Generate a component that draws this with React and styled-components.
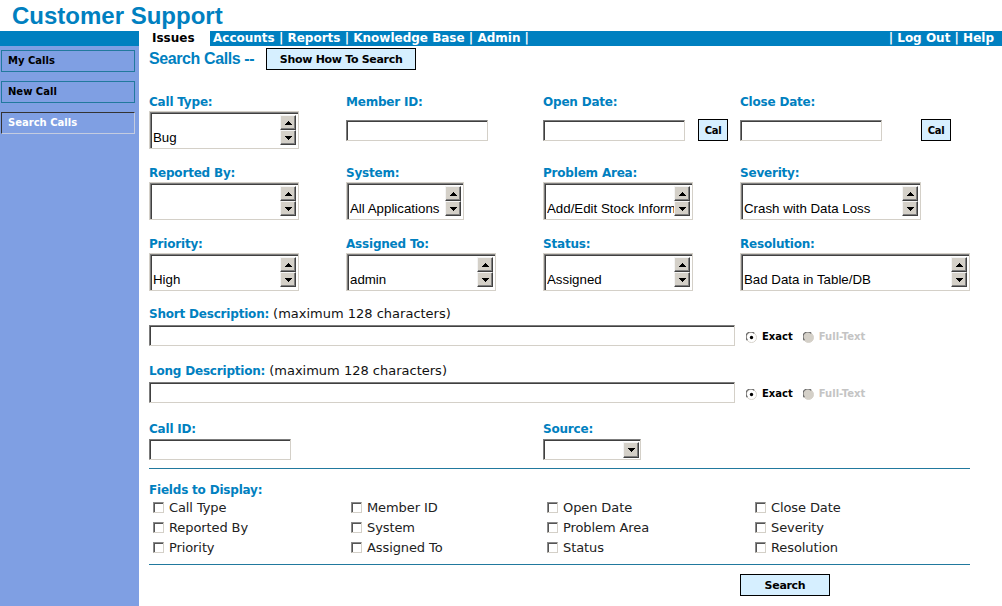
import React from 'react'
import styled, { createGlobalStyle, css } from 'styled-components'

const BLUE = '#0080c0'
const SIDE = '#7f9fe3'
const TEAL = '#21799e'
const BTN = '#d6efff'
const UI = '"DejaVu Sans", Verdana, sans-serif'
const ARIAL = '"Liberation Sans", Arial, sans-serif'

const GlobalStyle = createGlobalStyle`
  html, body {
    margin: 0;
    padding: 0;
    background: #fff;
  }
  body {
    font-family: ${UI};
    overflow: hidden;
  }
  * {
    box-sizing: border-box;
  }
`

const Page = styled.div`
  width: 1002px;
  height: 606px;
  display: flex;
  flex-direction: column;
  overflow: hidden;
`

const Header = styled.header`
  height: 31px;
  padding: 2px 0 0 12px;
`

const Title = styled.h1`
  margin: 0;
  font: bold 24px/28px ${ARIAL};
  color: ${BLUE};
`

const NavBar = styled.nav`
  height: 15px;
  display: flex;
  background: ${BLUE};
  font: bold 12px/15px ${UI};
  color: #fff;
  white-space: pre;
`

const NavSpacer = styled.div`
  width: 139px;
`

const ActiveTab = styled.div`
  width: 71px;
  padding-left: 13px;
  background: #fff;
  color: #000;
`

const NavLinks = styled.div`
  flex: 1;
  padding-left: 3px;
`

const NavRight = styled.div`
  padding-right: 8px;
`

const Body = styled.div`
  flex: 1;
  display: flex;
`

const Sidebar = styled.aside`
  width: 139px;
  background: ${SIDE};
  padding: 4px 4px 0 1px;
  display: flex;
  flex-direction: column;
  gap: 9px;
`

const SideItem = styled.div`
  height: 22px;
  padding-left: 6px;
  border: 1px solid ${TEAL};
  font: bold 10px/20px ${UI};
  color: #000;
  ${p => p.$active && css`
    border-color: #333 #c4cce0 #c4cce0 #333;
    color: #fff;
  `}
`

const Main = styled.main`
  flex: 1;
  padding: 2px 0 0 10px;
  display: flex;
  flex-direction: column;
`

const TopRow = styled.div`
  height: 22px;
  display: flex;
  align-items: center;
  gap: 12px;
`

const PageTitle = styled.h2`
  margin: 0;
  font: bold 16px/22px ${ARIAL};
  letter-spacing: -0.4px;
  color: ${BLUE};
`

const BlueButton = styled.button`
  flex-shrink: 0;
  width: ${p => p.$w}px;
  height: 22px;
  margin: 0 0 0 ${p => p.$gap || 0}px;
  padding: 0;
  background: ${BTN};
  border: 1px solid #000;
  font: bold ${p => p.$size || 11}px ${UI};
  letter-spacing: -0.3px;
  color: #000;
`

const FieldGrid = styled.div`
  display: grid;
  grid-template-columns: repeat(4, 197px);
  row-gap: 17px;
  margin-top: ${p => p.$top}px;
`

const Field = styled.div`
  display: flex;
  flex-direction: column;
`

const Label = styled.div`
  font: bold 12px/14px ${UI};
  letter-spacing: -0.2px;
  color: ${BLUE};
  margin-bottom: ${p => p.$gap ?? 2}px;
  white-space: nowrap;
`

const Hint = styled.span`
  font-size: 13px;
  font-weight: normal;
  color: #111;
  letter-spacing: 0;
`

const Control = styled.div`
  height: ${p => p.$h || 38}px;
  display: flex;
  align-items: center;
`

const ListFrame = styled.div`
  flex-shrink: 0;
  width: ${p => p.$w}px;
  height: 38px;
  display: flex;
  padding: 3px 2px 3px 3px;
  background: #fff;
  border: 1px solid #d4d0c8;
  box-shadow: inset 1px 1px 0 #808080, inset 2px 2px 0 #404040;
`

const ListText = styled.div`
  flex: 1;
  align-self: flex-end;
  overflow: hidden;
  white-space: nowrap;
  font: 13.3px/15px ${ARIAL};
  color: #000;
`

const ScrollCol = styled.div`
  display: flex;
  flex-direction: column;
`

const ScrollBtn = styled.div`
  flex-shrink: 0;
  width: 16px;
  height: ${p => p.$h || 15}px;
  display: flex;
  align-items: center;
  justify-content: center;
  background: #d4d0c8;
  border: 1px solid;
  border-color: #f4f4f4 #404040 #404040 #f4f4f4;
  box-shadow: inset -1px -1px 0 #808080;
`

const TextBox = styled.div`
  flex-shrink: 0;
  width: ${p => p.$w}px;
  height: 21px;
  background: #fff;
  border: 1px solid;
  border-color: #7c7c7c #d4d0c8 #d4d0c8 #7c7c7c;
  box-shadow: inset 1px 1px 0 #404040;
`

const SelectBox = styled.div`
  flex-shrink: 0;
  width: ${p => p.$w}px;
  height: 21px;
  display: flex;
  justify-content: flex-end;
  padding: 2px 1px 1px 2px;
  background: #fff;
  border: 1px solid;
  border-color: #7c7c7c #d4d0c8 #d4d0c8 #7c7c7c;
  box-shadow: inset 1px 1px 0 #404040;
`

const DescSection = styled.div`
  display: flex;
  flex-direction: column;
  margin-top: ${p => p.$top}px;
`

const DescRow = styled.div`
  display: flex;
  align-items: center;
`

const RadioGroup = styled.div`
  display: flex;
  align-items: center;
  gap: 10px;
  margin: 3px 0 0 11px;
  font: bold 10px/12px ${UI};
`

const RadioItem = styled.span`
  display: flex;
  align-items: center;
  gap: 5px;
  color: ${p => (p.$disabled ? '#c4c4c4' : '#000')};
`

const Divider = styled.hr`
  width: 821px;
  height: 1px;
  margin: ${p => p.$top}px 0 0;
  border: 0;
  background: ${TEAL};
`

const CheckGrid = styled.div`
  display: grid;
  grid-template-columns: 198px 196px 208px 1fr;
  padding-left: 4px;
`

const CheckItem = styled.span`
  height: 20px;
  display: flex;
  align-items: center;
  gap: 5px;
  font: 13px/15px ${UI};
  letter-spacing: -0.1px;
  color: #222;
`

const CheckBox = styled.span`
  flex-shrink: 0;
  width: 11px;
  height: 11px;
  background: #fff;
  border: 1px solid;
  border-color: #8a8a8a #d4d0c8 #d4d0c8 #8a8a8a;
  box-shadow: inset 1px 1px 0 #555;
`

const ButtonRow = styled.div`
  display: grid;
  grid-template-columns: repeat(4, 197px);
  margin-top: 9px;
`

const Arrow = ({ down }) => (
  <svg width="7" height="4" viewBox="0 0 7 4" shapeRendering="crispEdges">
    <polygon points={down ? '0,0 7,0 3.5,4' : '0,4 7,4 3.5,0'} fill="#000" />
  </svg>
)

const Radio = ({ checked, disabled }) => (
  <svg width="11" height="11" viewBox="0 0 12 12">
    <circle cx="6" cy="6" r="5.5" fill={disabled ? '#d4d0c8' : '#fff'} stroke="#d4d0c8" />
    <path d="M1.5 9 A5 5 0 0 1 9 1.5" fill="none" stroke="#6a6a6a" strokeWidth="1.4" />
    {checked && <circle cx="6" cy="6" r="1.8" fill="#000" />}
  </svg>
)

const ListBox = ({ width, value }) => (
  <ListFrame $w={width}>
    <ListText>{value}</ListText>
    <ScrollCol>
      <ScrollBtn><Arrow /></ScrollBtn>
      <ScrollBtn><Arrow down /></ScrollBtn>
    </ScrollCol>
  </ListFrame>
)

const listRows = [
  [
    { label: 'Reported By:', width: 150, value: '' },
    { label: 'System:', width: 118, value: 'All Applications' },
    { label: 'Problem Area:', width: 150, value: 'Add/Edit Stock Information' },
    { label: 'Severity:', width: 181, value: 'Crash with Data Loss' }
  ],
  [
    { label: 'Priority:', width: 150, value: 'High' },
    { label: 'Assigned To:', width: 150, value: 'admin' },
    { label: 'Status:', width: 150, value: 'Assigned' },
    { label: 'Resolution:', width: 230, value: 'Bad Data in Table/DB' }
  ]
]

const displayFields = [
  'Call Type', 'Member ID', 'Open Date', 'Close Date',
  'Reported By', 'System', 'Problem Area', 'Severity',
  'Priority', 'Assigned To', 'Status', 'Resolution'
]

const DescField = ({ label, top }) => (
  <DescSection $top={top}>
    <Label $gap={4}>
      {label} <Hint>(maximum 128 characters)</Hint>
    </Label>
    <DescRow>
      <TextBox $w={586} />
      <RadioGroup>
        <RadioItem><Radio checked />Exact</RadioItem>
        <RadioItem $disabled><Radio disabled />Full-Text</RadioItem>
      </RadioGroup>
    </DescRow>
  </DescSection>
)

const App = () => (
  <Page>
    <GlobalStyle />
    <Header>
      <Title>Customer Support</Title>
    </Header>
    <NavBar>
      <NavSpacer />
      <ActiveTab>Issues</ActiveTab>
      <NavLinks>Accounts | Reports | Knowledge Base | Admin |</NavLinks>
      <NavRight>| Log Out | Help</NavRight>
    </NavBar>
    <Body>
      <Sidebar>
        <SideItem>My Calls</SideItem>
        <SideItem>New Call</SideItem>
        <SideItem $active>Search Calls</SideItem>
      </Sidebar>
      <Main>
        <TopRow>
          <PageTitle>Search Calls --</PageTitle>
          <BlueButton $w={150}>Show How To Search</BlueButton>
        </TopRow>

        <FieldGrid $top={25}>
          <Field>
            <Label>Call Type:</Label>
            <Control><ListBox width={150} value="Bug" /></Control>
          </Field>
          <Field>
            <Label>Member ID:</Label>
            <Control><TextBox $w={142} /></Control>
          </Field>
          <Field>
            <Label>Open Date:</Label>
            <Control>
              <TextBox $w={142} />
              <BlueButton $w={30} $gap={13} $size={10}>Cal</BlueButton>
            </Control>
          </Field>
          <Field>
            <Label>Close Date:</Label>
            <Control>
              <TextBox $w={142} />
              <BlueButton $w={30} $gap={39} $size={10}>Cal</BlueButton>
            </Control>
          </Field>
          {listRows.flat().map(f => (
            <Field key={f.label}>
              <Label>{f.label}</Label>
              <Control><ListBox width={f.width} value={f.value} /></Control>
            </Field>
          ))}
        </FieldGrid>

        <DescField label="Short Description:" top={16} />
        <DescField label="Long Description:" top={18} />

        <FieldGrid $top={19}>
          <Field>
            <Label $gap={3}>Call ID:</Label>
            <Control $h={21}><TextBox $w={142} /></Control>
          </Field>
          <div />
          <Field>
            <Label $gap={3}>Source:</Label>
            <Control $h={21}>
              <SelectBox $w={98}>
                <ScrollBtn $h={16}><Arrow down /></ScrollBtn>
              </SelectBox>
            </Control>
          </Field>
        </FieldGrid>

        <Divider $top={8} />

        <DescSection $top={14}>
          <Label $gap={0}>Fields to Display:</Label>
          <CheckGrid>
            {displayFields.map(name => (
              <CheckItem key={name}><CheckBox />{name}</CheckItem>
            ))}
          </CheckGrid>
        </DescSection>

        <Divider $top={7} />

        <ButtonRow>
          <div />
          <div />
          <div />
          <BlueButton $w={90}>Search</BlueButton>
        </ButtonRow>
      </Main>
    </Body>
  </Page>
)

export default App
